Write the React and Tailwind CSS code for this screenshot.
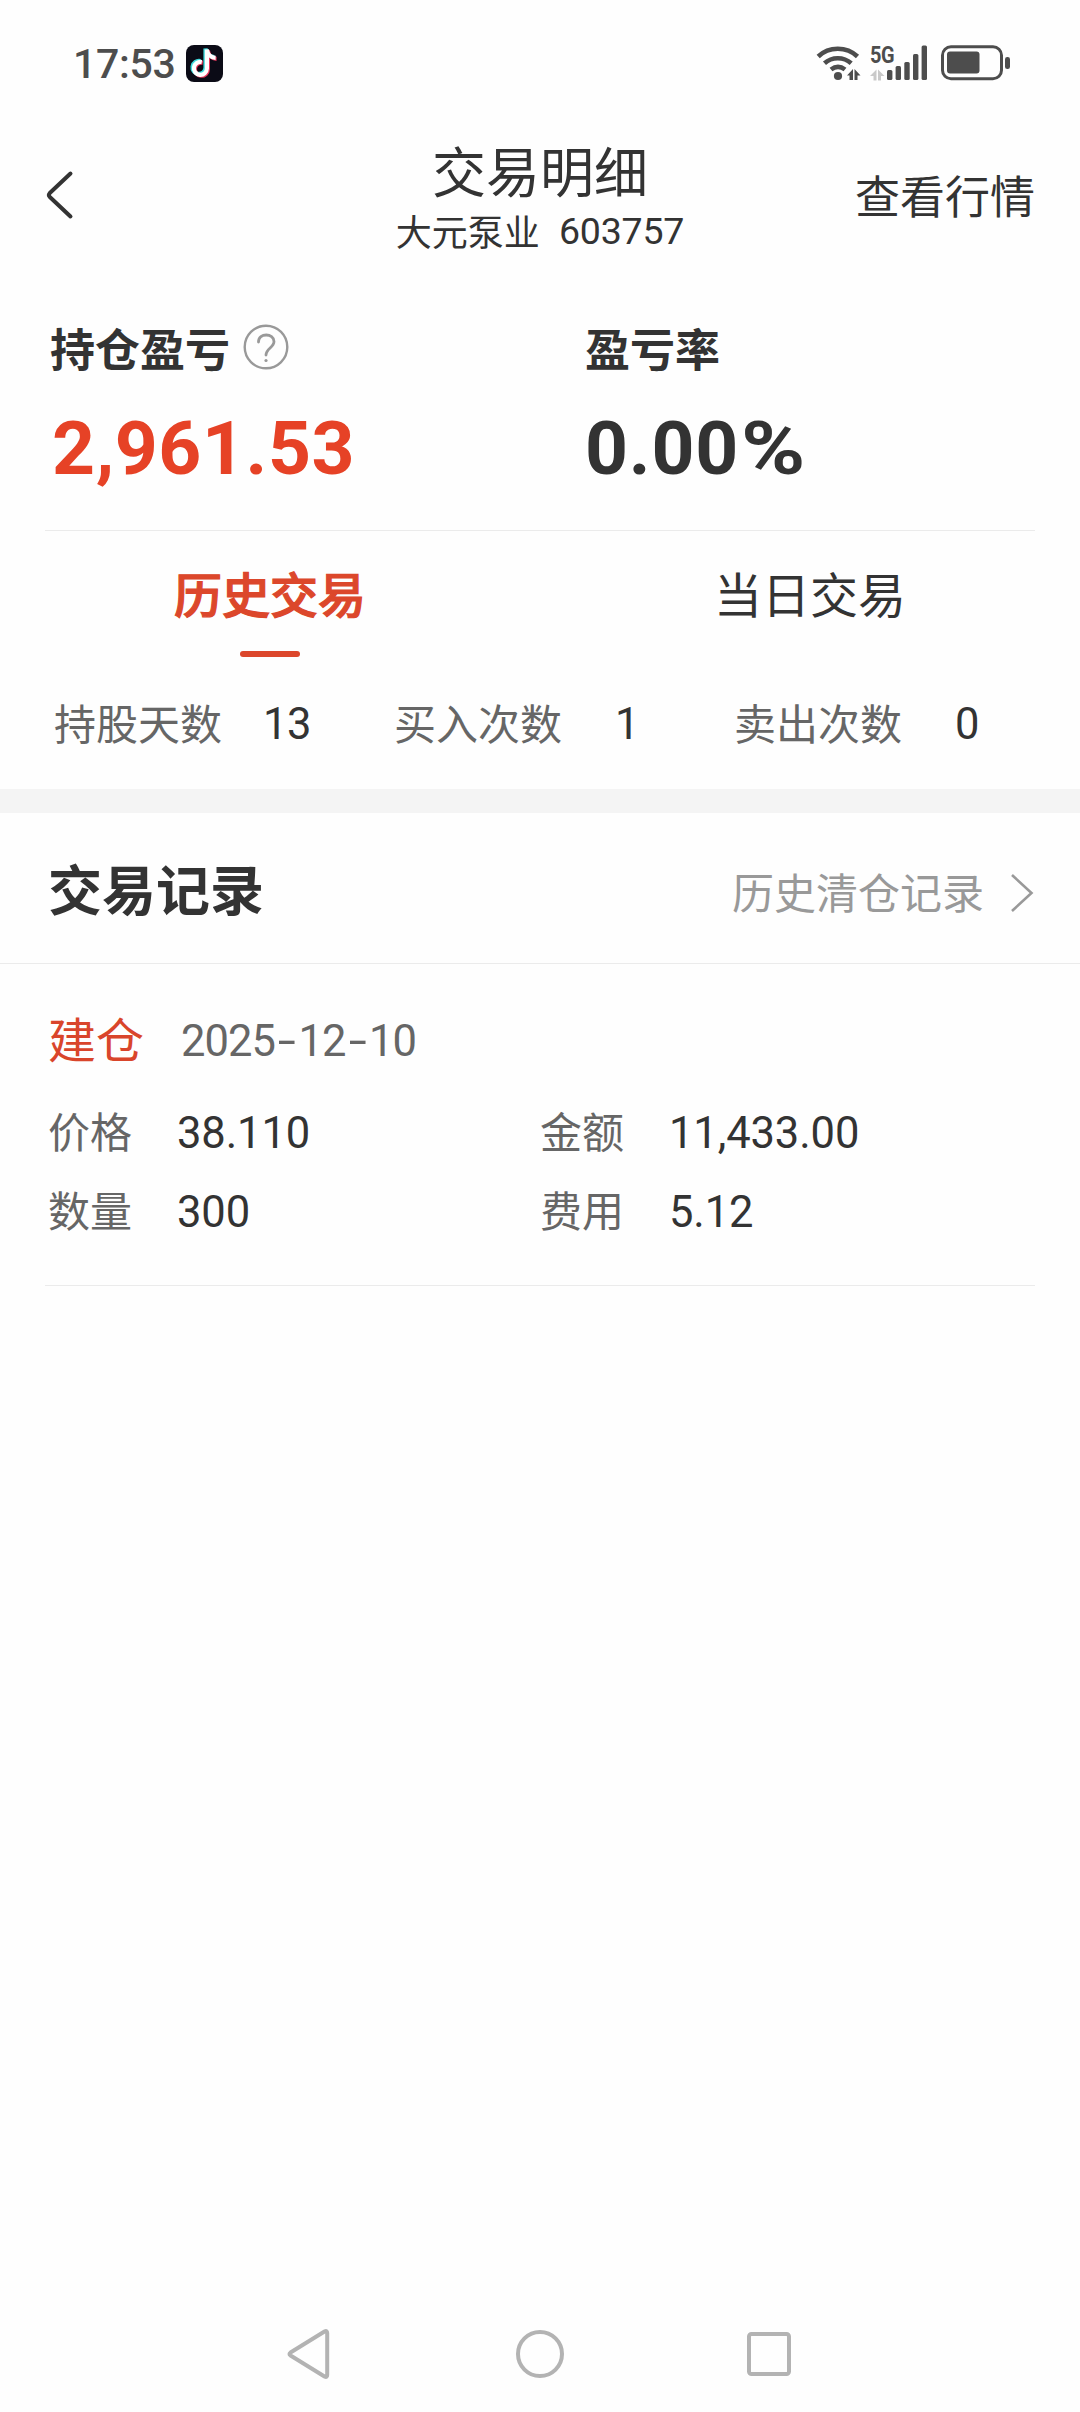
import React from "react";

const CJK = "font-['Noto_Sans_CJK_SC',sans-serif] whitespace-nowrap";
const NUM = "font-['Roboto',sans-serif] whitespace-nowrap";

function StatusBar() {
  return (
    <div className="flex h-[126px] items-center pl-[73px] pr-[70px]">
      <span className={`${NUM} mt-[1px] w-[104px] text-[41px] leading-[48px] font-medium tracking-[-0.3px] text-[#4d4d4d]`}>17:53</span>
      <svg className="ml-[9px] h-[37px] w-[37px]" viewBox="0 0 37 37">
        <rect width="37" height="37" rx="8" fill="#0b0b16" />
        <g fill="none" strokeWidth="4.2">
          <path d="M15.800 17a6.500 6.500 0 1 0 5.100 6.500V4.500c.6 5 4.100 8.200 8.700 8.400" stroke="#3fd9dc" transform="translate(-1.400 -0.900)" />
          <path d="M15.800 17a6.500 6.500 0 1 0 5.100 6.500V4.500c.6 5 4.100 8.200 8.700 8.400" stroke="#e8385c" transform="translate(1 0.900)" />
          <path d="M15.800 17a6.500 6.500 0 1 0 5.100 6.500V4.500c.6 5 4.100 8.200 8.700 8.400" stroke="#fff" />
        </g>
      </svg>
      <div className="ml-auto flex items-center">
        <svg className="h-[40px] w-[46px]" viewBox="0 0 46 40">
          <g fill="none" stroke="#4d4d4d" strokeWidth="4.6">
            <path d="M2.200 13.500C13 3.200 30.500 3.200 41.500 13.500" />
            <path d="M8.500 20.300C16 13.600 27.500 13.600 35.200 20.300" />
            <path d="M15 26.500C19.500 23 24.500 23 29 26.500" />
          </g>
          <circle cx="22" cy="33" r="4.1" fill="#4d4d4d" />
          <path d="M37 26v11h-3.500v-4.500H31zM38.500 37V26L44.500 32.500h-3V37z" fill="#4d4d4d" />
        </svg>
        <div className="ml-[8px] flex h-[40px] items-end">
          <div className="flex w-[17px] flex-col">
            <span className="font-['Roboto',sans-serif] origin-left scale-x-[0.83] text-[24px] leading-[20px] font-bold tracking-[-0.5px] text-[#4d4d4d]">5G</span>
            <svg className="mt-[4px] mb-[2px] h-[12px] w-[15px]" viewBox="0 0 15 12">
              <path d="M6.500 0.500v11H3.500V7H0zM8 11.500V0.500L14.500 7h-3.500v4.500z" fill="#c9c9c9" />
            </svg>
          </div>
          <svg className="h-[40px] w-[41px]" viewBox="0 0 41 40">
            <g fill="#4d4d4d">
              <rect x="0" y="27" width="5.400" height="10" rx="1.500" />
              <rect x="8.600" y="23" width="5.400" height="14" rx="1.500" />
              <rect x="17.300" y="19" width="5.400" height="18" rx="1.500" />
              <rect x="26" y="11" width="5.400" height="26" rx="1.500" />
              <rect x="34.600" y="2.500" width="5.400" height="34.500" rx="1.500" />
            </g>
          </svg>
        </div>
        <svg className="ml-[13px] h-[36px] w-[69px]" viewBox="0 0 69 36">
          <rect x="1.500" y="1.800" width="59" height="32" rx="8.500" fill="none" stroke="#4d4d4d" strokeWidth="3" />
          <rect x="6" y="6.500" width="32.500" height="22" rx="3" fill="#4d4d4d" />
          <rect x="64" y="12" width="5" height="12" rx="2.300" fill="#4d4d4d" />
        </svg>
      </div>
    </div>
  );
}

function Header() {
  return (
    <div className="grid h-[138px] grid-cols-[360px_360px_360px] items-center text-[#333]">
      <svg className="ml-[44px] h-[54px] w-[32px]" viewBox="0 0 32 54" fill="none" stroke="#333" strokeWidth="4" strokeLinecap="round" strokeLinejoin="round">
        <path d="M26.500 5.500L5.800 25Q4 27 5.800 29L26.500 48.500" />
      </svg>
      <div className="mt-[10px] flex flex-col items-center">
        <span className={`${CJK} text-[54px] leading-[60px]`}>交易明细</span>
        <div className="flex h-[60px] items-center">
          <span className={`${CJK} text-[36px]`}>大元泵业</span>
          <span className={`${NUM} mt-[3px] ml-[19px] text-[37.5px] tracking-[-0.2px]`}>603757</span>
        </div>
      </div>
      <span className={`${CJK} mr-[45px] justify-self-end text-[45px] leading-[54px]`}>查看行情</span>
    </div>
  );
}

function Summary() {
  return (
    <div className="grid h-[266px] grid-cols-[535px_1fr] pt-[53px] pl-[50px] text-[#333]">
      <div>
        <div className="flex h-[61px] items-center">
          <span className={`${CJK} text-[45px] leading-[60px] font-bold`}>持仓盈亏</span>
          <svg className="mb-[1px] ml-[13px] h-[46px] w-[46px]" viewBox="0 0 46 46" fill="none" stroke="#999" strokeLinecap="round">
            <circle cx="23" cy="23" r="21.300" strokeWidth="2.400" />
            <path d="M15.500 18C15.500 8.500 31 9 31 17.500c0 6-8 7-8 13.500" strokeWidth="2.800" />
            <circle cx="23" cy="36.500" r="1.600" fill="#999" stroke="none" />
          </svg>
        </div>
        <div className={`${NUM} mt-[26px] ml-[2px] text-[75px] leading-[88px] font-bold tracking-[0.6px] text-[#e64226]`}>2,961.53</div>
      </div>
      <div>
        <div className="flex h-[61px] items-center">
          <span className={`${CJK} text-[45px] leading-[60px] font-bold`}>盈亏率</span>
        </div>
        <div className={`${NUM} mt-[26px] flex text-[75px] leading-[88px] font-bold tracking-[0.8px]`}>
          <span>0.00</span>
          <span className="ml-[2px] origin-left scale-x-[1.16]">%</span>
        </div>
      </div>
    </div>
  );
}

function Tabs() {
  return (
    <div className="grid h-[127px] grid-cols-2 pt-[31px] text-[48px] leading-[60px]">
      <div className="flex flex-col items-center">
        <span className={`${CJK} font-medium text-[#dc472b] [-webkit-text-stroke:1.2px_#dc472b]`}>历史交易</span>
        <span className="mt-[29px] h-[6px] w-[60px] rounded-full bg-[#dc472b]" />
      </div>
      <div className="flex flex-col items-center">
        <span className={`${CJK} text-[#333]`}>当日交易</span>
      </div>
    </div>
  );
}

const stats = [
  ["持股天数", "13"],
  ["买入次数", "1"],
  ["卖出次数", "0"],
];

function Stats() {
  return (
    <div className="grid h-[131px] grid-cols-[340px_340px_340px] pl-[54px]">
      {stats.map(([label, value]) => (
        <div key={label} className="flex h-[128px] items-center">
          <span className={`${CJK} text-[42px] leading-[60px] text-[#666]`}>{label}</span>
          <span className={`${NUM} mt-[5px] w-[130px] text-center text-[43.5px] tracking-[-0.5px] text-[#333]`}>{value}</span>
        </div>
      ))}
    </div>
  );
}

const fields = [
  ["价格", "38.110"],
  ["金额", "11,433.00"],
  ["数量", "300"],
  ["费用", "5.12"],
];

function DateText({ value }) {
  return (
    <span className={`${NUM} mt-[9px] ml-[37px] flex text-[43.5px] leading-[60px] text-[#666]`}>
      {value.split("").map((c, i) => (
        <span key={i} className={c === "-" ? "w-[23.5px] scale-x-[1.5] text-center" : "w-[23.5px]"}>{c}</span>
      ))}
    </span>
  );
}

function Record() {
  return (
    <div className="mx-[45px] h-[322px] border-b border-[#ebebeb] pt-[43px] pl-[3px]">
      <div className="flex h-[60px] items-center">
        <span className={`${CJK} text-[48px] leading-[60px] text-[#d9452b]`}>建仓</span>
        <DateText value="2025-12-10" />
      </div>
      <div className="mt-[23px] grid auto-rows-[79px] grid-cols-[492px_1fr]">
        {fields.map(([label, value]) => (
          <div key={label} className="flex items-center">
            <span className={`${CJK} mt-[1px] w-[129px] text-[42px] leading-[60px] text-[#666]`}>{label}</span>
            <span className={`${NUM} mt-[8px] text-[43.5px] tracking-[-0.1px] text-[#333]`}>{value}</span>
          </div>
        ))}
      </div>
    </div>
  );
}

function NavBar() {
  return (
    <div className="mt-auto flex h-[116px] items-center justify-between px-[281px]">
      <svg className="h-[56px] w-[56px]" viewBox="0 0 56 56" fill="none" stroke="#b3b3b3" strokeWidth="4" strokeLinejoin="round">
        <path d="M43.500 5.500Q46.200 4 46.200 7V49Q46.200 52 43.500 50.500L9.500 29.500Q7.500 28 9.500 26.500Z" />
      </svg>
      <svg className="h-[56px] w-[56px]" viewBox="0 0 56 56" fill="none" stroke="#b3b3b3" strokeWidth="4">
        <circle cx="28" cy="28" r="22" />
      </svg>
      <svg className="h-[56px] w-[56px]" viewBox="0 0 56 56" fill="none" stroke="#b3b3b3" strokeWidth="4">
        <rect x="6" y="8" width="40" height="40" rx="2.500" />
      </svg>
    </div>
  );
}

export default function App() {
  return (
    <div className="flex h-[2412px] w-[1080px] flex-col overflow-hidden bg-[#fefefe]">
      <StatusBar />
      <Header />
      <Summary />
      <div className="mx-[45px] h-px bg-[#ebebeb]" />
      <Tabs />
      <Stats />
      <div className="h-[24px] bg-[#f4f4f4]" />
      <div className="flex h-[151px] items-center border-b border-[#ebebeb] pr-[46px] pl-[48px]">
        <span className={`${CJK} mb-[1px] text-[54px] leading-[60px] font-bold text-[#333]`}>交易记录</span>
        <span className={`${CJK} mt-[5px] ml-auto text-[42px] leading-[60px] text-[#999]`}>历史清仓记录</span>
        <svg className="mt-[10px] ml-[26px] h-[40px] w-[24px]" viewBox="0 0 24 40" fill="none" stroke="#999" strokeWidth="2.600">
          <path d="M2 2L21.500 20L2 38" />
        </svg>
      </div>
      <Record />
      <NavBar />
    </div>
  );
}
